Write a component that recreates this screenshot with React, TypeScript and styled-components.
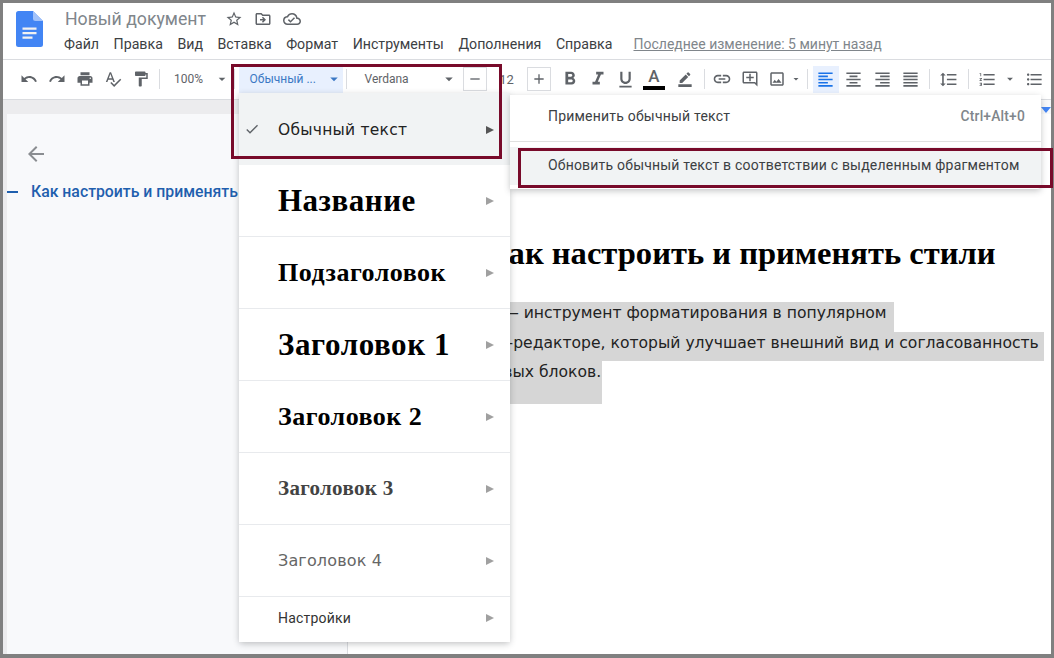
import React from 'react';
import styled, { createGlobalStyle } from 'styled-components';
import {
  MdUndo, MdRedo, MdPrint, MdSpellcheck, MdFormatPaint, MdFormatBold, MdFormatItalic,
  MdFormatUnderlined, MdLink, MdOutlineAddComment, MdOutlineImage, MdFormatAlignLeft,
  MdFormatAlignCenter, MdFormatAlignRight, MdFormatAlignJustify, MdFormatLineSpacing,
  MdFormatListNumbered, MdFormatListBulleted, MdStarBorder, MdOutlineDriveFileMove,
  MdOutlineCloudDone, MdArrowBack, MdCheck, MdBorderColor, MdArrowDropDown, MdAdd, MdRemove,
} from 'react-icons/md';

const GlobalStyle = createGlobalStyle`
  html, body { margin: 0; padding: 0; background: #808080; }
  body { font-family: Roboto, "Liberation Sans", sans-serif; }
`;

const Screen = styled.div`
  position: relative;
  width: 1054px;
  height: 658px;
  box-sizing: border-box;
  padding: 3px 3px 4px;
  background: #808080;
  overflow: hidden;
`;

const Window = styled.div`
  height: 100%;
  display: flex;
  flex-direction: column;
  background: #fff;
`;

const Header = styled.header`
  height: 57px;
  flex: none;
  display: flex;
  align-items: flex-start;
  box-sizing: border-box;
  padding: 8px 0 0 13px;
  border-bottom: 1px solid #dadce0;
`;

const HeaderText = styled.div`
  margin: -1px 0 0 21px;
  display: flex;
  flex-direction: column;
`;

const TitleRow = styled.div`
  height: 18px;
  display: flex;
  align-items: center;
  gap: 11px;
  color: #5f6368;
`;

const Title = styled.span`
  font-size: 17.7px;
  color: #80868b;
  margin: 0 8px 0 1px;
`;

const MenuRow = styled.nav`
  margin-top: 7px;
  height: 18px;
  display: flex;
  align-items: center;
  gap: 14.5px;
  font-size: 14.2px;
  color: #3c4043;
`;

const LastEdit = styled.span`
  margin-left: 6.5px;
  color: #80868b;
  font-size: 14px;
  text-decoration: underline;
`;

const Toolbar = styled.div`
  height: 40px;
  flex: none;
  box-sizing: border-box;
  display: flex;
  align-items: center;
  padding: 0 0 1px 11.5px;
  border-bottom: 1px solid #dadce0;
  color: #5f6368;
`;

const ToolButton = styled.span<{ $active?: boolean; $w?: number }>`
  width: ${(p) => p.$w ?? 28}px;
  height: 27px;
  flex: none;
  display: flex;
  align-items: center;
  justify-content: center;
  color: ${(p) => (p.$active ? '#1a73e8' : '#5f6368')};
  background: ${(p) => (p.$active ? '#e8f0fe' : 'transparent')};
  font-size: 12px;
`;

const Sep = styled.span<{ $m?: number }>`
  width: 1px;
  height: 20px;
  flex: none;
  background: #dadce0;
  margin: 0 ${(p) => p.$m ?? 4}px;
`;

const StyleSelect = styled.span`
  width: 104px;
  height: 27px;
  flex: none;
  box-sizing: border-box;
  padding-left: 11px;
  display: flex;
  align-items: center;
  justify-content: space-between;
  background: #e8f0fe;
  color: #3b78c4;
  font-size: 12px;
`;

const FontSelect = styled.span`
  width: 108px;
  margin-right: 5px;
  flex: none;
  box-sizing: border-box;
  padding-left: 15px;
  display: flex;
  align-items: center;
  justify-content: space-between;
  font-size: 12px;
`;

const SizeBox = styled.span`
  width: 24px;
  height: 24px;
  flex: none;
  display: flex;
  align-items: center;
  justify-content: center;
  border: 1px solid #dadce0;
  box-sizing: border-box;
`;

const SizeValue = styled.span`
  width: 40px;
  flex: none;
  text-align: center;
  font-size: 13px;
  color: #5f6368;
`;

const TextColor = styled.span`
  width: 29px;
  flex: none;
  display: flex;
  flex-direction: column;
  align-items: center;
  font: 500 17px/17px Roboto, sans-serif;
  &::after {
    content: '';
    width: 22px;
    height: 4px;
    margin-top: 1px;
    background: #000;
  }
`;

const Body = styled.div`
  flex: 1;
  min-height: 0;
  display: flex;
`;

const Sidebar = styled.aside`
  width: 345px;
  flex: none;
  box-sizing: border-box;
  background: #ececee;
  padding: 14px 0 0 4px;
  border-right: 1px solid #dadce0;
`;

const SidebarPanel = styled.div`
  height: 100%;
  background: #f8f9fb;
  box-sizing: border-box;
  padding-top: 28px;
  color: #8a8d91;
  overflow: hidden;
`;

const BackArrow = styled.div`
  padding-left: 17px;
  height: 24px;
`;

const OutlineItem = styled.div`
  margin-top: 16px;
  display: flex;
  align-items: center;
  white-space: nowrap;
  font-size: 15.8px;
  font-weight: 500;
  color: #1f5fae;
  &::before {
    content: '';
    width: 11px;
    height: 2px;
    background: #1f5fae;
    margin-right: 13px;
    flex: none;
  }
`;

const Page = styled.main`
  flex: 1;
  min-width: 0;
  background: #fff;
  overflow: hidden;
  display: flex;
  flex-direction: column;
`;

const Ruler = styled.div`
  height: 14px;
  flex: none;
  background: #f8f9fa;
  display: flex;
  justify-content: flex-end;
`;

const Doc = styled.article`
  padding: 121px 7px 0 100px;
  font-family: "DejaVu Sans", Verdana, sans-serif;
  font-size: 15.6px;
  color: #222;
`;

const DocTitle = styled.h1`
  margin: 0 0 31px -11px;
  text-align: center;
  font: bold 32.6px/36px "Liberation Serif", serif;
  color: #000;
  white-space: nowrap;
`;

const Line = styled.div<{ $pad?: number; $end: number }>`
  width: fit-content;
  height: 29.5px;
  line-height: 23px;
  padding-right: ${(p) => p.$end}px;
  padding-bottom: ${(p) => p.$pad ?? 0}px;
  background: #d6d6d6;
  white-space: nowrap;
`;

const StyleMenu = styled.div`
  position: absolute;
  left: 239px;
  top: 93px;
  width: 271px;
  background: #fff;
  border-radius: 0 0 4px 4px;
  box-shadow: 0 2px 6px rgba(60, 64, 67, 0.3);
`;

const StyleRow = styled.div<{ $h: number; $selected?: boolean; $first?: boolean }>`
  position: relative;
  height: ${(p) => p.$h}px;
  box-sizing: border-box;
  display: flex;
  align-items: center;
  padding: ${(p) => (p.$first ? '2px' : '0')} 16px 0 39px;
  background: ${(p) => (p.$selected ? '#f1f3f4' : '#fff')};
  border-bottom: ${(p) => (p.$first ? 'none' : '1px solid #e8eaed')};
  &:last-child {
    border-bottom: none;
    padding-bottom: 3px;
  }
`;

const CheckMark = styled.span`
  position: absolute;
  left: 5px;
  top: 28px;
  color: #5f6368;
  display: flex;
`;

type LabelKind = 'normal' | 'title' | 'subtitle' | 'h1' | 'h2' | 'h3' | 'h4' | 'settings';

const labelCss: Record<LabelKind, string> = {
  normal: 'font: 15.5px "DejaVu Sans", sans-serif; color: #222; letter-spacing: .25px;',
  title: 'font: bold 31px "Liberation Serif", serif; color: #000; letter-spacing: .5px;',
  subtitle: 'font: bold 26px "Liberation Serif", serif; color: #000; letter-spacing: .5px;',
  h1: 'font: bold 31px "Liberation Serif", serif; color: #000; letter-spacing: .6px;',
  h2: 'font: bold 26px "Liberation Serif", serif; color: #000; letter-spacing: .5px;',
  h3: 'font: bold 21px "Liberation Serif", serif; color: #434343; letter-spacing: .3px;',
  h4: 'font: 16px "DejaVu Sans", sans-serif; color: #666; letter-spacing: .15px;',
  settings: 'font: 14px Roboto, sans-serif; color: #333; letter-spacing: .2px;',
};

const RowLabel = styled.span<{ $kind: LabelKind }>`
  flex: 1;
  white-space: nowrap;
  ${(p) => labelCss[p.$kind]}
`;

const Caret = styled.span<{ $dark?: boolean }>`
  width: 0;
  height: 0;
  border-style: solid;
  border-width: 4.5px 0 4.5px 8px;
  border-color: transparent transparent transparent ${(p) => (p.$dark ? '#555' : '#a0a0a0')};
`;

const SubMenu = styled.div`
  position: absolute;
  left: 510px;
  top: 95px;
  width: 531px;
  height: 94px;
  box-sizing: border-box;
  background: #fff;
  border-radius: 0 4px 4px 0;
  box-shadow: 0 2px 6px rgba(60, 64, 67, 0.3);
  display: flex;
  flex-direction: column;
  font-size: 14px;
  color: #3c4043;
`;

const SubRow = styled.div<{ $hover?: boolean }>`
  height: ${(p) => (p.$hover ? '38px' : '46px')};
  box-sizing: border-box;
  padding: 0 16px ${(p) => (p.$hover ? '2px' : '5px')} 38px;
  display: flex;
  align-items: center;
  justify-content: space-between;
  white-space: nowrap;
  letter-spacing: 0.2px;
  background: ${(p) => (p.$hover ? '#f1f3f4' : '#fff')};
`;

const SubDivider = styled.div`
  height: 1px;
  background: #e0e0e0;
  margin-bottom: 5px;
`;

const Shortcut = styled.span`
  color: #80868b;
  font-weight: 500;
  font-size: 13.8px;
`;

const Callout = styled.div<{ $l: number; $t: number; $w: number; $h: number }>`
  position: absolute;
  left: ${(p) => p.$l}px;
  top: ${(p) => p.$t}px;
  width: ${(p) => p.$w}px;
  height: ${(p) => p.$h}px;
  box-sizing: border-box;
  border: 3px solid #780a2a;
  pointer-events: none;
`;

const DocsLogo = () => (
  <svg width="27" height="36" viewBox="0 0 27 36">
    <path d="M2.5 0H17l10 10v23.5a2.5 2.5 0 0 1-2.5 2.5h-22A2.5 2.5 0 0 1 0 33.5V2.5A2.5 2.5 0 0 1 2.5 0z" fill="#4285f4" />
    <path d="M17 0l10 10h-7.5A2.5 2.5 0 0 1 17 7.5z" fill="#a1c2fa" />
    <path d="M6.5 16.5h14v2.2h-14zM6.5 21h14v2.2h-14zM6.5 25.5h10v2.2h-10z" fill="#f1f1f1" />
  </svg>
);

const RulerMark = () => (
  <svg width="10" height="14" viewBox="0 0 10 14">
    <path d="M0 7h10l-5 6z" fill="#4285f4" />
  </svg>
);

const menuItems = ['Файл', 'Правка', 'Вид', 'Вставка', 'Формат', 'Инструменты', 'Дополнения', 'Справка'];

const styleRows: { kind: LabelKind; text: string; h: number }[] = [
  { kind: 'title', text: 'Название', h: 72 },
  { kind: 'subtitle', text: 'Подзаголовок', h: 72 },
  { kind: 'h1', text: 'Заголовок 1', h: 72 },
  { kind: 'h2', text: 'Заголовок 2', h: 72 },
  { kind: 'h3', text: 'Заголовок 3', h: 72 },
  { kind: 'h4', text: 'Заголовок 4', h: 72 },
  { kind: 'settings', text: 'Настройки', h: 45 },
];

export default function App() {
  return (
    <Screen>
      <GlobalStyle />
      <Window>
        <Header>
          <DocsLogo />
          <HeaderText>
            <TitleRow>
              <Title>Новый документ</Title>
              <MdStarBorder size={18} />
              <MdOutlineDriveFileMove size={18} />
              <MdOutlineCloudDone size={18} />
            </TitleRow>
            <MenuRow>
              {menuItems.map((m) => <span key={m}>{m}</span>)}
              <LastEdit>Последнее изменение: 5 минут назад</LastEdit>
            </MenuRow>
          </HeaderText>
        </Header>
        <Toolbar>
          <ToolButton><MdUndo size={18} /></ToolButton>
          <ToolButton><MdRedo size={18} /></ToolButton>
          <ToolButton><MdPrint size={18} /></ToolButton>
          <ToolButton><MdSpellcheck size={18} /></ToolButton>
          <ToolButton><MdFormatPaint size={18} /></ToolButton>
          <Sep />
          <ToolButton $w={50}>100%</ToolButton>
          <ToolButton $w={16}><MdArrowDropDown size={18} /></ToolButton>
          <Sep />
          <StyleSelect>Обычный ...<MdArrowDropDown size={18} /></StyleSelect>
          <Sep $m={3} />
          <FontSelect>Verdana<MdArrowDropDown size={18} /></FontSelect>
          <SizeBox><MdRemove size={16} /></SizeBox>
          <SizeValue>12</SizeValue>
          <SizeBox><MdAdd size={16} /></SizeBox>
          <ToolButton $w={5} />
          <ToolButton><MdFormatBold size={22} /></ToolButton>
          <ToolButton><MdFormatItalic size={22} /></ToolButton>
          <ToolButton><MdFormatUnderlined size={21} /></ToolButton>
          <TextColor>A</TextColor>
          <ToolButton $w={32}><MdBorderColor size={16} /></ToolButton>
          <Sep $m={3} />
          <ToolButton><MdLink size={20} /></ToolButton>
          <ToolButton><MdOutlineAddComment size={18} /></ToolButton>
          <ToolButton $w={26}><MdOutlineImage size={18} /></ToolButton>
          <ToolButton $w={12}><MdArrowDropDown size={16} /></ToolButton>
          <Sep $m={5} />
          <ToolButton $active $w={26}><MdFormatAlignLeft size={19} /></ToolButton>
          <ToolButton $w={30}><MdFormatAlignCenter size={19} /></ToolButton>
          <ToolButton><MdFormatAlignRight size={19} /></ToolButton>
          <ToolButton><MdFormatAlignJustify size={19} /></ToolButton>
          <Sep />
          <ToolButton $w={30}><MdFormatLineSpacing size={19} /></ToolButton>
          <Sep />
          <ToolButton $w={30}><MdFormatListNumbered size={19} /></ToolButton>
          <ToolButton $w={14}><MdArrowDropDown size={16} /></ToolButton>
          <ToolButton $w={36}><MdFormatListBulleted size={19} /></ToolButton>
        </Toolbar>
        <Body>
          <Sidebar>
            <SidebarPanel>
              <BackArrow><MdArrowBack size={24} /></BackArrow>
              <OutlineItem>Как настроить и применять стили</OutlineItem>
            </SidebarPanel>
          </Sidebar>
          <Page>
            <Ruler><RulerMark /></Ruler>
            <Doc>
              <DocTitle>Как настроить и применять стили</DocTitle>
              <Line $end={7}>Стили — инструмент форматирования в популярном</Line>
              <Line $end={5}>онлайн-редакторе, который улучшает внешний вид и согласованность</Line>
              <Line $pad={13} $end={1}>текстовых блоков.</Line>
            </Doc>
          </Page>
        </Body>
      </Window>

      <StyleMenu>
        <StyleRow $h={72} $selected $first>
          <CheckMark><MdCheck size={16} /></CheckMark>
          <RowLabel $kind="normal">Обычный текст</RowLabel>
          <Caret $dark />
        </StyleRow>
        {styleRows.map((r) => (
          <StyleRow key={r.text} $h={r.h}>
            <RowLabel $kind={r.kind}>{r.text}</RowLabel>
            <Caret />
          </StyleRow>
        ))}
      </StyleMenu>

      <SubMenu>
        <SubRow>
          <span>Применить обычный текст</span>
          <Shortcut>Ctrl+Alt+0</Shortcut>
        </SubRow>
        <SubDivider />
        <SubRow $hover>Обновить обычный текст в соответствии с выделенным фрагментом</SubRow>
      </SubMenu>

      <Callout $l={231} $t={64} $w={271} $h={95} />
      <Callout $l={518} $t={148} $w={535} $h={40} />
    </Screen>
  );
}
